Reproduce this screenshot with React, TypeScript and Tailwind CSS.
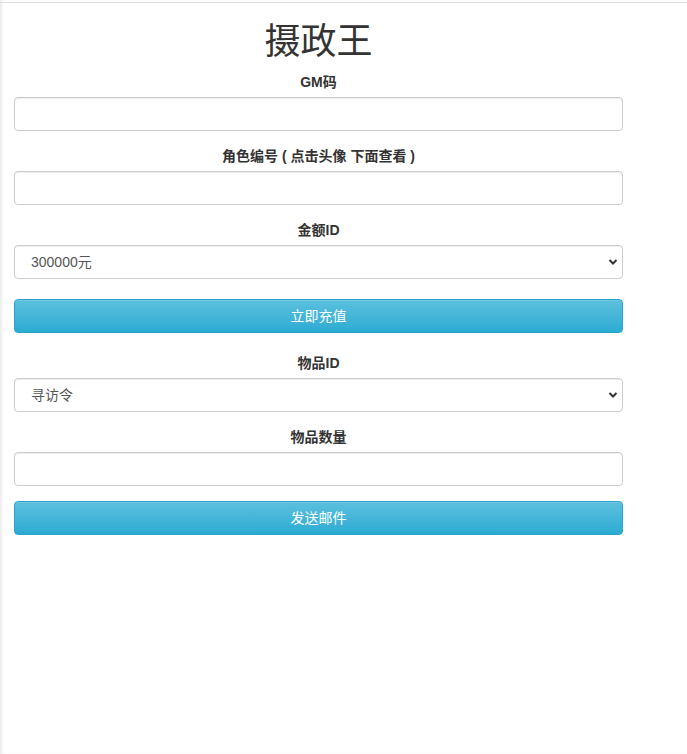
import type { ReactNode } from "react";

const font = { fontFamily: '"Liberation Sans", "Noto Sans CJK SC", sans-serif' };

function Label({ children }: { children: ReactNode }) {
    return (
        <label className="block text-center text-[14px] font-bold leading-[20px] text-[#333] mb-[5px]">
            {children}
        </label>
    );
}

function TextInput() {
    return (
        <input
            type="text"
            className="block w-full h-[34px] px-3 text-[14px] text-[#555] bg-white border border-[#ccc] rounded-[4px]
        shadow-[inset_0_1px_1px_rgba(0,0,0,0.075)] outline-none"
        />
    );
}

function Select({ value, options }: { value: string; options: string[] }) {
    return (
        <div className="relative">
            <select
                defaultValue={value}
                className="block w-full h-[34px] pl-[16px] pr-8 text-[14px] text-[#555] bg-white border border-[#ccc] rounded-[4px]
          shadow-[inset_0_1px_1px_rgba(0,0,0,0.075)] outline-none appearance-none"
            >
                {options.map(o => (
                    <option key={o}>{o}</option>
                ))}
            </select>
            <svg
                className="absolute right-[5px] top-[13px] w-[10px] h-[8px] pointer-events-none"
                viewBox="0 0 10 8"
                fill="none"
                stroke="#333"
                strokeWidth="2"
            >
                <path d="M1.5 2 L5 5.5 L8.5 2" />
            </svg>
        </div>
    );
}

function InfoButton({ children }: { children: ReactNode }) {
    return (
        <button
            type="button"
            className="block w-full h-[34px] text-[14px] text-white rounded-[4px] border border-[#28a4c9]
        bg-gradient-to-b from-[#5bc0de] to-[#2aabd2] shadow-[inset_0_1px_0_rgba(255,255,255,0.15)]"
        >
            {children}
        </button>
    );
}

export default function App() {
    return (
        <div className="min-h-[754px] bg-white pt-[2px] shadow-[inset_3px_0_3px_-1px_rgba(0,0,0,0.08)]" style={font}>
            <div className="border-t border-[#ddd]">
                <div className="w-[623px] pl-[14px]">
                    <h1 className="text-center text-[36px] leading-[40px] text-[#333] mt-[19px] mb-[10px]">摄政王</h1>

                    {/* 账号 */}
                    <div className="mb-[15px]">
                        <Label>GM码</Label>
                        <TextInput />
                    </div>
                    <div className="mb-[15px]">
                        <Label>角色编号 ( 点击头像 下面查看 )</Label>
                        <TextInput />
                    </div>

                    {/* 充值 */}
                    <div className="mb-[20px]">
                        <Label>金额ID</Label>
                        <Select value="300000元" options={["300000元", "100000元", "50000元", "10000元"]} />
                    </div>
                    <InfoButton>立即充值</InfoButton>

                    {/* 邮件 */}
                    <div className="mt-[20px] mb-[15px]">
                        <Label>物品ID</Label>
                        <Select value="寻访令" options={["寻访令", "元宝", "体力丹"]} />
                    </div>
                    <div className="mb-[15px]">
                        <Label>物品数量</Label>
                        <TextInput />
                    </div>
                    <InfoButton>发送邮件</InfoButton>
                </div>
            </div>
        </div>
    );
}
